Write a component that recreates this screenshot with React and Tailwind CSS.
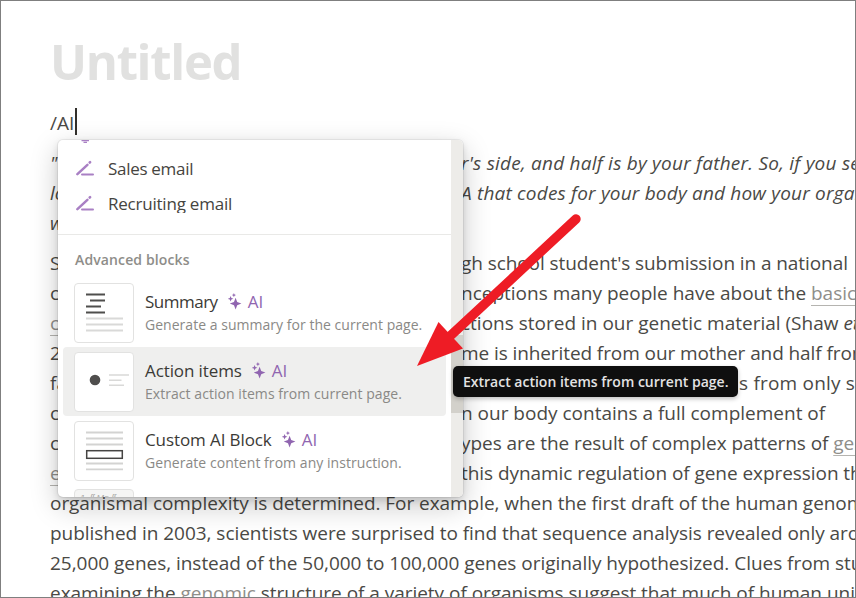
import React from 'react';

const RefLink = ({ children }) => (
  <span className="text-[#8f8e8a] underline decoration-1 underline-offset-[5px] decoration-[#b5b4b0]">{children}</span>
);

// start = what sticks out left of the menu, rest = what continues right of it
const wrappedLines = [
  { start: '"', rest: "r's side, and half is by your father. So, if you see", italic: true, track: 'tracking-[0.23px]' },
  { start: 'lo', rest: 'A that codes for your body and how your organs', italic: true, track: 'tracking-[0.19px]' },
  { start: 'w', rest: '', italic: true, track: '', last: true },
  { start: 'S', rest: "gh school student's submission in a national", track: 'tracking-[-0.08px]' },
  { start: 'c', rest: <>nceptions many people have about the <RefLink>basics</RefLink></>, track: '' },
  { start: <RefLink>co</RefLink>, rest: <>ctions stored in our genetic material (Shaw <i>et</i></>, track: '' },
  { start: '2', rest: 'me is inherited from our mother and half from', track: 'tracking-[-0.09px]' },
  { start: 'fa', rest: 's from only se', track: 'tracking-[0.2px]', indent: 'pl-[278px]' },
  { start: 'c', rest: 'n our body contains a full complement of', track: '' },
  { start: 'c', rest: <>ypes are the result of complex patterns of <RefLink>gene</RefLink></>, track: 'tracking-[-0.06px]' },
  { start: <RefLink>ex</RefLink>, rest: 'this dynamic regulation of gene expression that', track: 'tracking-[-0.06px]' },
];

const fullLines = [
  { text: 'organismal complexity is determined. For example, when the first draft of the human genome', track: 'tracking-[-0.05px]' },
  { text: 'published in 2003, scientists were surprised to find that sequence analysis revealed only around', track: 'tracking-[-0.04px]' },
  { text: '25,000 genes, instead of the 50,000 to 100,000 genes originally hypothesized. Clues from studies', track: 'tracking-[-0.03px]' },
  { text: <>examining the <RefLink>genomic</RefLink> structure of a variety of organisms suggest that much of human unique</>, track: 'tracking-[-0.03px]' },
];

const PenIcon = () => (
  <svg className="w-[19px] h-[18px] shrink-0" viewBox="0 0 19 18" fill="none" stroke="#a980c4">
    <path d="M1.4 14.2 L11.4 4.8" strokeWidth="2.5" strokeLinecap="round" />
    <path d="M13.7 2.5 L14.1 2.1" strokeWidth="2.6" strokeLinecap="round" />
    <path d="M6 14.5 H17" strokeWidth="2" strokeLinecap="round" />
  </svg>
);

const Sparkles = () => (
  <svg className="relative -top-px w-[14px] h-[17px] shrink-0" viewBox="0 0 14 17" fill="#9065b0">
    <path d="M7.6 4.8 L9.2 9 L13.4 10.6 L9.2 12.2 L7.6 16.4 L6 12.2 L1.8 10.6 L6 9 Z" />
    <path d="M2.6 3 L3.4 5 L5.4 5.8 L3.4 6.6 L2.6 8.6 L1.8 6.6 L-0.2 5.8 L1.8 5 Z" />
    <path d="M5.9 0 L6.5 1.5 L8 2.1 L6.5 2.7 L5.9 4.2 L5.3 2.7 L3.8 2.1 L5.3 1.5 Z" />
  </svg>
);

const SummaryThumb = () => (
  <svg className="w-full h-full" viewBox="0 0 58 58" strokeWidth="2" fill="none">
    <path d="M11 10.5 H30 M15 16.5 H30 M11 22.5 H26 M11 28.5 H30" stroke="#4f4e4d" />
    <path d="M11 34.5 H48 M11 40.5 H48 M11 46.5 H48" stroke="#d9d9d8" />
  </svg>
);

const ActionThumb = () => (
  <svg className="w-full h-full" viewBox="0 0 58 58" fill="none">
    <circle cx="20" cy="27" r="5.3" fill="#4f4e4d" />
    <path d="M34 22 H54 M34 27.3 H46.5 M34 32.3 H49" stroke="#d9d9d8" strokeWidth="1.6" />
  </svg>
);

const CustomThumb = () => (
  <svg className="w-full h-full" viewBox="0 0 58 58" fill="none">
    <path d="M11 10.5 H48 M11 16.5 H48 M11 22.5 H48 M11 41.5 H48 M11 47.3 H48" stroke="#d3d3d2" strokeWidth="1.8" />
    <rect x="11.7" y="28.7" width="35.6" height="7.6" stroke="#454443" strokeWidth="1.5" />
  </svg>
);

const emails = [
  { label: 'Sales email', track: 'tracking-[-0.3px]' },
  { label: 'Recruiting email', track: 'tracking-[-0.22px]' },
];

const blocks = [
  { name: 'Summary', desc: 'Generate a summary for the current page.', thumb: <SummaryThumb />, nameTrack: 'tracking-[-0.5px]', descTrack: 'tracking-[0.03px]' },
  { name: 'Action items', desc: 'Extract action items from current page.', thumb: <ActionThumb />, nameTrack: 'tracking-[-0.1px]', descTrack: 'tracking-[0.05px]', active: true },
  { name: 'Custom AI Block', desc: 'Generate content from any instruction.', thumb: <CustomThumb />, nameTrack: 'tracking-[-0.1px]', descTrack: 'tracking-[0.05px]' },
];

const SlashMenu = () => (
  <div className="absolute left-[57px] top-[139px] w-[405px] h-[357px] flex rounded-[5px] overflow-hidden bg-white shadow-[0_0_0_1px_rgba(15,15,15,0.06),0_3px_7px_rgba(15,15,15,0.13),0_9px_28px_rgba(15,15,15,0.22)]">
    <div className="flex-1 min-w-0 h-full overflow-hidden flex flex-col">
      <div className="h-[11px] shrink-0 pl-[23px]">
        <svg className="w-[9px] h-[4px]" viewBox="0 0 9 4" stroke="#a980c4" strokeWidth="1.2">
          <path d="M0.5 0.6 H8 M2.5 2.4 H6" />
        </svg>
      </div>
      {emails.map((item) => (
        <div key={item.label} className="h-[35px] shrink-0 flex items-center pl-[18px] gap-[13px]">
          <PenIcon />
          <div className={`h-[19px] leading-[19px] overflow-hidden text-[17px] text-[#454440] ${item.track}`}>{item.label}</div>
        </div>
      ))}
      <div className="h-[14px] shrink-0 border-b border-[#e9e9e7]" />
      <div className="h-[43px] shrink-0 flex items-center pl-[17px] pt-[5px] text-[14px] font-semibold text-[#8e8d89] tracking-[0.12px]">Advanced blocks</div>
      {blocks.map((block) => (
        <div
          key={block.name}
          className={`h-[69px] shrink-0 ml-[5px] mr-[5px] pl-[11px] flex items-center gap-[11px] rounded-[4px] ${block.active ? 'bg-[#efefee]' : ''}`}
        >
          <div className="w-[60px] h-[60px] shrink-0 rounded-[4px] border border-[#e2e2e1] bg-white">{block.thumb}</div>
          <div className="whitespace-nowrap">
            <div className="flex items-center h-[24px] text-[17px] text-[#3b3a36]">
              <span className={block.nameTrack}>{block.name}</span>
              <span className="ml-[10px] flex items-center gap-[6px] text-[#9065b0]">
                <Sparkles />
                AI
              </span>
            </div>
            <div className={`h-[21px] leading-[21px] text-[14px] text-[#8a8986] ${block.descTrack}`}>{block.desc}</div>
          </div>
        </div>
      ))}
      <div className="h-[60px] w-[60px] shrink-0 mt-[4px] ml-[16px] rounded-[4px] border border-[#e2e2e1] bg-[#f5f5f4] pl-[5px] pt-[3px] font-['Liberation_Sans'] italic text-[9px] leading-[10px] text-[#aaa9a6] whitespace-nowrap">
        1. ſſ Mo ſſ
      </div>
    </div>
    <div className="w-[12px] shrink-0 bg-[#edece9] pt-[195px]">
      <div className="h-[78px] bg-[#d3d1cb]" />
    </div>
  </div>
);

const App = () => {
  return (
    <div className="relative w-[856px] h-[598px] overflow-hidden bg-white border border-[#7f7f7f] font-['Open_Sans','Noto_Sans',sans-serif] text-[#4a4945]">
      <div className="pl-[49px] whitespace-nowrap">
        <h1 className="pt-[26px] h-[102px] text-[49px] leading-[68px] font-bold tracking-[-1.3px] text-[#e1e1e0]">Untitled</h1>
        <div className="h-[45px] flex items-start pt-[5px] text-[19px] leading-[30px]">
          <span>/AI</span>
          <span className="ml-px w-[2px] h-[27px] bg-[#32302c]" />
        </div>
        <div className="text-[19px] leading-[30px]">
          {wrappedLines.map((line, i) => (
            <div key={i} className={`h-[30px] flex ${line.italic ? 'italic' : ''} ${line.last ? 'mb-[10px]' : ''}`}>
              <span className="w-[411px] shrink-0">{line.start}</span>
              <span className={`${line.track} ${line.indent || ''}`}>{line.rest}</span>
            </div>
          ))}
          {fullLines.map((line, i) => (
            <p key={i} className={`h-[30px] ${line.track}`}>{line.text}</p>
          ))}
        </div>
      </div>

      <SlashMenu />

      <svg className="absolute left-[415px] top-[211px] w-[168px] h-[158px]" viewBox="416 212 168 158">
        <path d="M576 219 L448 338" stroke="#ee1c25" strokeWidth="9.4" strokeLinecap="round" />
        <path d="M417 366 L438.5 322 L463 348.5 Z" fill="#ee1c25" />
      </svg>

      <div className="absolute left-[452px] top-[365px] w-[285px] h-[31px] flex items-center pl-[10px] rounded-[5px] bg-[#0f0f0f] text-[#e3e3e3] text-[14px] font-semibold whitespace-nowrap shadow-[0_2px_4px_rgba(15,15,15,0.25)]">
        Extract action items from current page.
      </div>
    </div>
  );
};

export default App;
